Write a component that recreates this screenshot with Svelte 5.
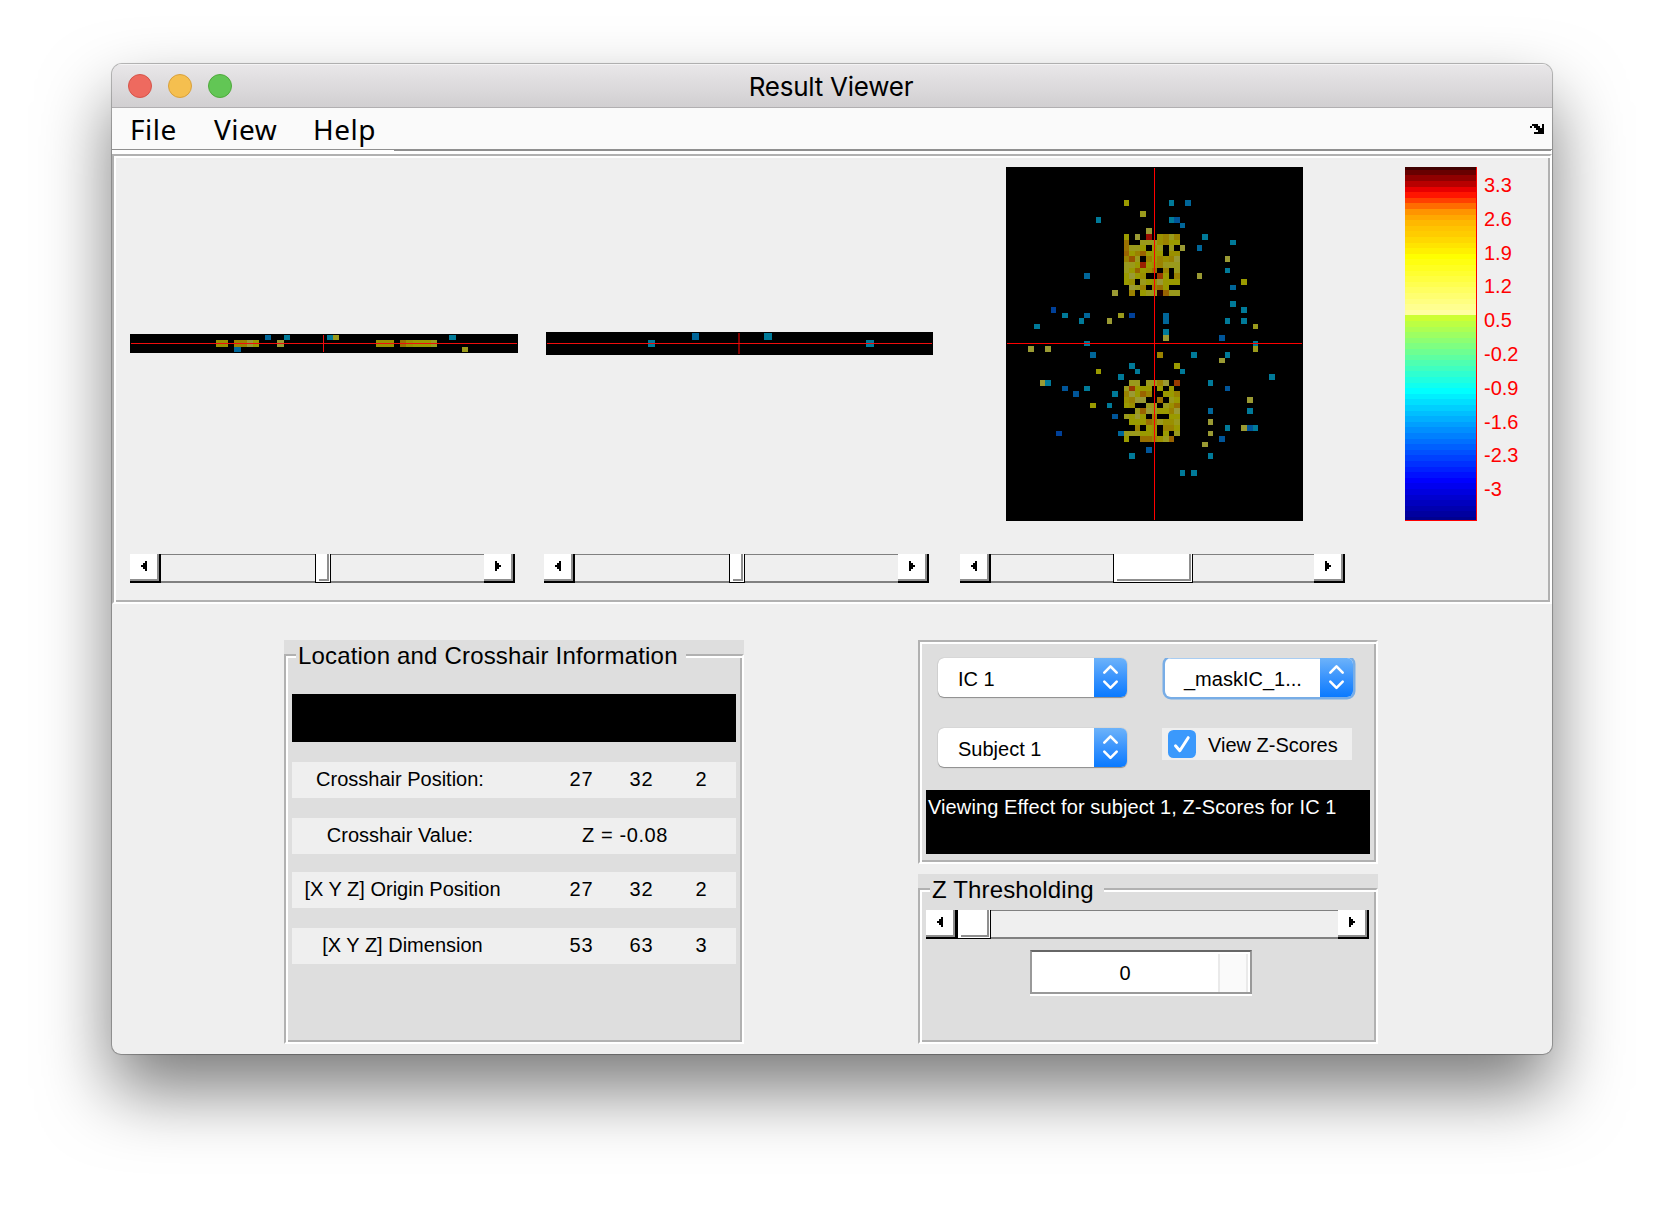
<script>
  const tones = {
    y: '#9a9a00', m: '#9a9000', g: '#9a8200', o: '#997000', d: '#996300', b: '#995500',
    l: '#9a9a1c', p: '#9a9a33', C: '#993a00', r: '#992000', R: '#990b00', k: '#200000',
    1: '#007a99', 2: '#006699', 3: '#005599', 4: '#004099'
  };

  // Dense activation clusters: each string is one voxel row starting at column 21.
  const clusters = [
    { row: 12, lines: ['y.p.R.mglg', 'o..lllmgyy', 'olly.yl.l.', 'dygdyyy.mm', 'gbl.gygmgp', 'llyrymglll', 'lydymo.g.l', 'ypym..Cy.g', 'ym.lympyyy', '.plg.goy..', '.g.yllkdll'] },
    { row: 38, lines: ['.ll.llgp.C', 'lCyyy.y.y.', 'gpydg..yyg', 'mgpp..o.ly', 'ym..ll.lmo', '..ldplyygp', 'lypy.g..yy', '.yyyoglmml', '..g.ym.ggy', 'lllyym.y.l', 'y..oogmld.'] }
  ];

  // Isolated voxels, "row: column+tone".
  const scattered = `6:21y,291,322;8:24l;9:161,291,303;10:312;11:25p;12:351;13:401;14:342,31p;16:39p;18:391;19:142,34p;
20:42y;21:402;22:19p;24:401;25:84,421;26:101,142,20l,224,282;27:131,18p,282,391,421;28:51,44l;29:281;30:28p,383;
31:141,441;32:4p,7p,44l;33:152,27g,331,391;34:38p;35:221,30y;36:16y,231,311;37:201,471;38:6p,71,361;39:103,141,393;
40:123,191;41:43p;42:15y,181;43:362,431;44:193;45:36p;46:391,42p,433,441;47:94,202,36p;48:383;49:35p;50:253;51:221,361;54:311,331`;

  const voxels = [];
  for (const { row, lines } of clusters)
    lines.forEach((line, r) => [...line].forEach((ch, c) => ch !== '.' && voxels.push([21 + c, row + r, ch])));
  for (const part of scattered.split(';')) {
    const [row, cells] = part.trim().split(':');
    for (const cell of cells.split(',')) voxels.push([+cell.slice(0, -1), +row, cell.slice(-1)]);
  }
  const px = (c) => Math.round((c * 297) / 53);
  const py = (r) => Math.floor((r * 354) / 63);

  const sagittal = [
    [86, 6, 12, 7, 'm'], [104, 6, 13, 7, 'g'], [117, 6, 6, 7, 'p'], [123, 6, 6, 7, 'y'], [135, 1, 6, 5, '2'],
    [154, 1, 6, 5, '1'], [147, 6, 7, 7, 'p'], [104, 13, 7, 5, '2'], [197, 1, 6, 5, '1'], [203, 1, 6, 5, 'l'],
    [246, 6, 18, 7, 'm'], [270, 6, 6, 7, 'o'], [276, 6, 7, 7, 'm'], [283, 6, 18, 7, 'y'], [301, 6, 6, 7, 'l'],
    [319, 1, 7, 5, '1'], [332, 13, 6, 5, 'l']
  ];
  const coronal = [[102, 8, 7, 7, '1'], [146, 1, 7, 7, '2'], [218, 1, 8, 7, '1'], [320, 8, 8, 7, '1']];

  const hot = ['#400000', '#680000', '#900000', '#b80000', '#e80000', '#ff1500', '#ff4000', '#ff6c00', '#ff9400',
    '#ffa800', '#ffb800', '#ffc400', '#ffcc00', '#ffd800', '#ffe400', '#fff000', '#ffff00'];
  const ramp = (k) => {
    if (k < 17) return hot[k];
    if (k < 27) return `rgb(255,255,${(k - 16) * 16})`;
    if (k < 41) return `rgb(${Math.round(204 * (40 - k) / 13)},255,${Math.round(51 + 204 * (k - 27) / 13)})`;
    if (k < 57) return `rgb(0,${Math.round(255 * (56 - k) / 16)},255)`;
    return `rgb(0,0,${Math.round(255 - (k - 56) * 16)})`;
  };
  const edge = (k) => Math.min(353, Math.floor(3.25 + k * 5.6));
  const bands = Array.from({ length: 64 }, (_, k) => {
    const top = k === 0 ? 0 : edge(k - 1);
    return { top, height: edge(k) - top, fill: ramp(k) };
  });
  const ticks = ['3.3', '2.6', '1.9', '1.2', '0.5', '-0.2', '-0.9', '-1.6', '-2.3', '-3'];

  const info = [
    { label: 'Crosshair Position:', values: ['27', '32', '2'], early: true },
    { label: 'Crosshair Value:', text: 'Z = -0.08', early: true },
    { label: '[X Y Z] Origin Position', values: ['27', '32', '2'] },
    { label: '[X Y Z] Dimension', values: ['53', '63', '3'] }
  ];
</script>

{#snippet slider(before, thumb)}
  <div class="slider">
    <div class="step"><svg width="29" height="27" shape-rendering="crispEdges"><path d="M11 11h2v-2h2v-2h2v10h-2v-2h-2v-2h-2z" /></svg></div>
    <div class="rail" style:width="{before}px"></div>
    <div class="thumb" style:width="{thumb}px"></div>
    <div class="rail rest"></div>
    <div class="step"><svg width="29" height="27" shape-rendering="crispEdges"><path d="M17 11h-2v-2h-2v-2h-2v10h2v-2h2v-2h2z" /></svg></div>
  </div>
{/snippet}

{#snippet popup(text, focused)}
  <div class="popup" class:focused>
    <span class="choice">{text}</span>
    <span class="arrows">
      <svg width="33" height="39" viewBox="0 0 33 39" fill="none" stroke="#fff" stroke-width="2.6" stroke-linecap="round" stroke-linejoin="round">
        <path d="M10.3 14.6l6.2-6.2 6.2 6.2M10.3 23.6l6.2 6.2 6.2-6.2" />
      </svg>
    </span>
  </div>
{/snippet}

<main>
  <div class="window">
    <header class="titlebar">
      <div class="lights"><i class="close"></i><i class="minimise"></i><i class="zoom"></i></div>
      <h1>Result Viewer</h1>
    </header>
    <nav class="menubar">
      <span class="file">File</span><span class="view">View</span><span class="help">Help</span>
      <svg class="dock" width="14" height="10" shape-rendering="crispEdges">
        <path d="M2 0h6v2h2v2h2v-4h2v10h-10v-2h4v-2h-2v-2h-2v-2h-2v2h-2v-2h2z" />
      </svg>
    </nav>
    <div class="rule"><span></span></div>

    <section class="viewer groove">
      <div class="views">
        <svg class="sagittal" width="388" height="19" shape-rendering="crispEdges">
          <rect width="388" height="19" />
          {#each sagittal as [x, y, w, h, t]}<rect {x} {y} width={w} height={h} fill={tones[t]} />{/each}
          <path d="M1 9h386v1H1zM193 1h1v17h-1z" fill="#f00d0d" />
        </svg>
        <svg class="coronal" width="387" height="23" shape-rendering="crispEdges">
          <rect width="387" height="23" />
          {#each coronal as [x, y, w, h, t]}<rect {x} {y} width={w} height={h} fill={tones[t]} />{/each}
          <path d="M192 1h2v21h-2z" fill="#800000" />
          <path d="M1 11h385v1H1z" fill="#f00d0d" />
        </svg>
        <svg class="axial" width="297" height="354" shape-rendering="crispEdges">
          <rect width="297" height="354" />
          {#each voxels as [c, r, t]}
            <rect x={px(c)} y={py(r)} width={px(c + 1) - px(c)} height={py(r + 1) - py(r)} fill={tones[t]} />
          {/each}
          <path d="M1 176h295v1H1zM148 1h1v352h-1z" fill="#f00" />
        </svg>
        <svg class="colorbar" width="72" height="354" shape-rendering="crispEdges">
          {#each bands as b}<rect y={b.top} width="71" height={b.height} fill={b.fill} />{/each}
          <path d="M71 0h1v354H0v-1h71z" fill="#f00" />
        </svg>
        <ol class="ticks">{#each ticks as t}<li>{t}</li>{/each}</ol>
      </div>
      <div class="sliders">
        {@render slider(154, 16)}
        {@render slider(154, 16)}
        {@render slider(122, 80)}
      </div>
    </section>

    <div class="lower">
      <section class="box location">
        <div class="groove">
          <h2>Location and Crosshair Information</h2>
          <div class="readout"></div>
          {#each info as row}
            <div class="row">
              <span class="label" class:early={row.early}>{row.label}</span>
              {#if row.values}
                {#each row.values as v}<span class="num">{v}</span>{/each}
              {:else}
                <span class="score">{row.text}</span>
              {/if}
            </div>
          {/each}
        </div>
      </section>

      <div class="side">
        <section class="controls groove">
          <div class="pair">{@render popup('IC 1', false)}{@render popup('_maskIC_1...', true)}</div>
          <div class="pair">
            {@render popup('Subject 1', false)}
            <div class="check">
              <svg width="28" height="28" viewBox="0 0 28 28">
                <rect width="28" height="28" rx="5.5" fill="#3b99fc" />
                <path d="M7.5 15.8l4.3 4.9 8.4-13" fill="none" stroke="#fff" stroke-width="3" stroke-linecap="round" stroke-linejoin="round" />
              </svg>
              <span>View Z-Scores</span>
            </div>
          </div>
          <p class="status">Viewing Effect for subject 1, Z-Scores for IC 1</p>
        </section>

        <section class="box threshold">
          <div class="groove">
            <h2>Z Thresholding</h2>
            {@render slider(0, 34)}
            <div class="edit"><span class="value">0</span><span class="scroll"></span></div>
          </div>
        </section>
      </div>
    </div>
  </div>
</main>

<style>
  :global(body) { margin: 0; background: #fff; }
  * { box-sizing: border-box; }
  h1, h2, p, ol { margin: 0; padding: 0; font-weight: 400; }
  svg { display: block; flex: none; }

  main { width: 1664px; height: 1214px; padding: 64px 0 0 112px; overflow: hidden; background: #fff; }
  .window {
    width: 1440px; height: 990px;
    display: flex; flex-direction: column;
    background: #efefef; border-radius: 10px 10px 9px 9px; overflow: hidden;
    box-shadow: 0 0 0 1px rgba(0, 0, 0, .22), 0 0 2px rgba(0, 0, 0, .2), 0 36px 70px rgba(0, 0, 0, .52);
    font: 20px/24px 'Liberation Sans', Arial, sans-serif; color: #000;
  }
  .titlebar {
    height: 44px; flex: none; display: flex; align-items: center;
    background: linear-gradient(#e9e7e9, #d1cfd1); border-bottom: 1px solid #b1afb1;
    box-shadow: inset 0 1px #f4f3f4;
  }
  .lights { display: flex; gap: 16px; margin-left: 16px; width: 300px; }
  .lights i { width: 24px; height: 24px; border-radius: 50%; border-width: 1px; border-style: solid; }
  .lights .close { background: #ee6a5f; border-color: #d5544a; }
  .lights .minimise { background: #f5bf4f; border-color: #d8a03c; }
  .lights .zoom { background: #62c655; border-color: #4fa93c; }
  h1 { flex: 1; margin-right: 318px; text-align: center; font: 26px/40px Inter, sans-serif; letter-spacing: -.25px; padding-top: 2px; }

  .menubar { height: 41px; flex: none; display: flex; background: #fafafa; font: 28px/30px 'Noto Sans', sans-serif; letter-spacing: .5px; padding-top: 6px; }
  .menubar span { width: 84px; }
  .menubar .file { margin-left: 18px; }
  .menubar .view { width: 99px; margin-left: 0; }
  .dock { margin: 10px 8px 0 auto; }
  .rule { height: 5px; flex: none; background: #fff; border-top: 1px solid #8f8f8f; }
  .rule span { display: block; height: 1px; margin: 0 1px 0 282px; background: #8f8f8f; }

  .groove {
    border: 2px solid; border-color: #b1b1b1 #fff #fff #b1b1b1;
    box-shadow: inset 2px 2px #fff, inset -2px -2px #b1b1b1;
  }
  .viewer { height: 450px; flex: none; padding: 11px 0 0 16px; }
  .views { display: flex; align-items: center; height: 354px; }
  .sagittal, .coronal { margin-bottom: 2px; }
  .coronal { margin-left: 28px; }
  .axial { margin-left: 73px; }
  .colorbar { margin-left: 102px; }
  .ticks { list-style: none; margin-left: 7px; height: 354px; padding-top: 6px; color: #f00; font-size: 20px; }
  .ticks li { height: 33.8px; line-height: 24px; }
  .sliders { display: flex; gap: 29px; margin-top: 33px; }
  .sliders .slider:last-child { margin-left: 2px; }

  .slider { display: flex; height: 29px; width: 385px; flex: none; }
  .step {
    width: 31px; flex: none; background: #fff; border: solid #000; border-width: 0 2px 2px 0;
    box-shadow: inset -2px -2px #8f8f8f;
  }
  .rail { flex: none; background: #efefef; border: solid #808080; border-width: 1px 0 2px; }
  .rest { flex: 1; }
  .thumb {
    flex: none; background: #fff; border: 1px solid #000; border-top: 0;
    box-shadow: inset -1px -1px #fff, inset 3px 0 #fff, inset -3px -3px #8f8f8f;
  }

  .lower { display: flex; justify-content: space-between; padding: 36px 174px 0 172px; }
  .box { background: #dedede; padding-top: 14px; }
  .box .groove { display: flex; flex-direction: column; padding: 0 6px; }
  h2 {
    align-self: flex-start; background: #dedede; height: 28px; margin: -13px 0 2px 4px;
    padding: 0 0 0 2px; font-size: 24px; line-height: 26px; white-space: nowrap;
  }
  .location { width: 460px; height: 404px; }
  .location .groove { height: 390px; }
  .location h2 { width: 390px; letter-spacing: .18px; }
  .readout { height: 48px; margin: 21px 0 20px; background: #000; }
  .row { display: flex; height: 36px; margin-bottom: 20px; background: #efefef; line-height: 34px; }
  .row:nth-of-type(3) { margin-bottom: 18px; }
  .label { width: 221px; margin-right: 38px; text-align: center; white-space: nowrap; }
  .early { padding-right: 5px; }
  .num { width: 60px; text-align: center; letter-spacing: .8px; padding-left: 1px; }
  .score { width: 148px; text-align: center; letter-spacing: .6px; }

  .side { width: 460px; }
  .controls { height: 224px; background: #dedede; padding: 16px 6px 0; }
  .pair { display: flex; height: 70px; padding-left: 12px; gap: 35px; align-items: flex-start; }
  .popup {
    display: flex; width: 189px; height: 39px; border-radius: 6px; overflow: hidden; background: #fff;
    box-shadow: 0 1px 1px rgba(0, 0, 0, .35), 0 0 1px rgba(0, 0, 0, .3);
  }
  .choice { flex: 1; padding-left: 20px; line-height: 43px; white-space: nowrap; }
  .arrows { width: 33px; background: linear-gradient(#6db3fa, #3a94fd 50%, #0a7aff); }
  .focused { width: 188px; margin-left: 3px; box-shadow: 0 0 0 2.5px #78ade6; clip-path: inset(0 -4px -4px -4px); }
  .focused .choice { padding-left: 19px; box-shadow: inset 0 1px #a9cdf2; }
  .check { display: flex; align-items: center; width: 190px; height: 32px; padding-left: 6px; background: #efefef; }
  .check span { margin-left: 12px; padding-top: 2px; white-space: nowrap; }
  .status { height: 64px; margin-top: -8px; padding: 5px 2px; background: #000; color: #fff; letter-spacing: .1px; white-space: nowrap; }

  .threshold { margin-top: 10px; height: 170px; }
  .threshold .groove { height: 156px; }
  .threshold h2 { width: 174px; height: 29px; margin-bottom: 4px; letter-spacing: .15px; }
  .threshold .slider { width: 443px; }
  .edit {
    width: 222px; height: 44px; margin: 11px 0 0 104px; display: flex; background: #fff;
    border: 2px solid #999; border-top-color: #666; box-shadow: 0 2px #fff;
  }
  .value { width: 186px; text-align: center; line-height: 42px; }
  .scroll { width: 30px; margin-top: 2px; background: #fafafa; border: solid #eaeaea; border-width: 0 2px; }
</style>
